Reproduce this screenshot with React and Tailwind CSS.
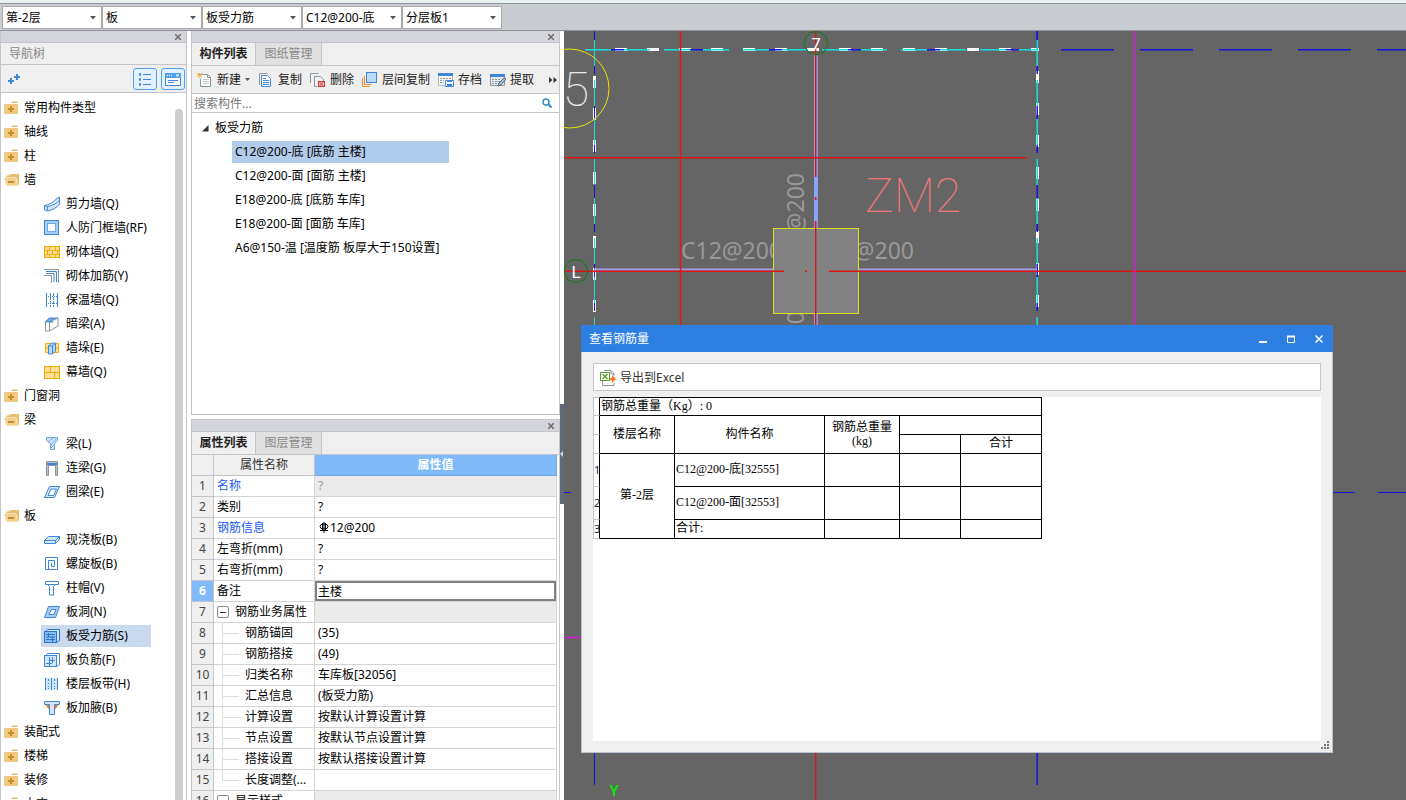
import React, { useState } from 'react';

const B = '#3f86d6';
const L = '#d3e5fa';

const shapes = {
  shear: <path d="M.5 9.500c5-1 9-3 11-6l4-2.500v7c-3 4-7 6-12 7l-3-1zM.5 9.500l3 1c5-1 9-3 12-6.500M3.500 10.500v4" fill={L} stroke={B} />,
  frame: <g stroke={B}><rect x=".5" y=".5" width="14" height="14" fill="#a9cdf5" /><rect x="3.5" y="3.5" width="8" height="8" fill="#fff" stroke="#6ea8ea" /><rect x="5" y="4" width="5" height="7" fill="#fff" stroke="none" /></g>,
  brick: <g stroke="#f5a800" fill="#ffe09a"><rect x="0.5" y="2.5" width="15" height="11" /><path d="M0 6.500h16M0 10.500h16M5.500 2v4M11.500 2v4M3.500 6v4M8.500 6v4M13.500 6v4M5.500 10v4M11.500 10v4" /></g>,
  corner: <g fill="none"><path d="M0 1.500h14.500V15M0 7.500h7.500V15" stroke="#8a959c" /><path d="M2 3.500h10.500V14M2 5.500h8V14" stroke={B} /></g>,
  insulate: <g stroke={B}><path d="M2.500 1v14M13.500 1v14" /><path d="M6.500 1v14M9.500 1v14" strokeDasharray="3 1" /><path d="M2 4.500h12M2 11.500h12" strokeDasharray="1 1" /></g>,
  hidden: <g><path d="M1.500 6l4-4h8.500l-4 4z" fill="#78b0ee" stroke={B} /><path d="M1.500 6h4v9h-4zM5.500 6l8.500-4v8l-8.500 5" fill="#fff" stroke="#8a959c" /><path d="M1.500 6l4-4M5.500 6l4-4M5.500 6h4" fill="none" stroke={B} /></g>,
  pier: <g><path d="M1.500 3.500h13v9h-13zM1 8h14" fill="#ffe09a" stroke="#f5a800" /><path d="M4.500 6l3-3h4v8l-3 3h-4zM4.500 6h4v8M8.500 6l3-3" fill="#b9d8f8" stroke={B} /></g>,
  curtain: <g stroke="#f5a800" fill="#ffe09a"><rect x="0.5" y="2.5" width="15" height="12" /><path d="M0 8.500h16M6.500 2v6M10.500 8v6" /></g>,
  beam: <path d="M2.500 1.500h11v3l-3 3v6h-4v-6l-4-3zM4 6l5-4M7 9l5-6M7 12l3-3" fill={L} stroke="#6ea3e0" />,
  lintel: <g><path d="M2.500 15.500V1.500h11v14h-2V5.500h-7v10z" fill="#b5bfc4" stroke="#8a959c" /><path d="M3 4h10" stroke={B} strokeWidth="2" /></g>,
  ring: <path d="M5.500 2.500h10l-5 11h-10zM7 5h5.500l-3 6.500h-5.500z" fill={L} fillRule="evenodd" stroke={B} />,
  slab: <g fill={L} stroke={B}><path d="M.5 8.500l4-4h11l-4 4z" /><path d="M.5 8.500h11v3H.5zM11.500 8.500l4-4v3l-4 4" /></g>,
  spiral: <g fill="none" stroke={B}><path d="M1.500 1.500h12v12h-12z" /><path d="M4.500 14V4.500h6v6h-3v-3.500" /></g>,
  cap: <path d="M1.500 1.500h13v3h-3l-2 2v8.500h-4V6.500l-2-2h-2zM2 4.500h12" fill="#fff" stroke={B} />,
  hole: <g stroke={B}><path d="M4.500 2.500h11l-4 11h-11z" fill="#a9cdf5" /><path d="M7.500 5.500h4.500l-2 5h-5z" fill="#fff" /></g>,
  rebar: <g stroke="#2f74c6"><path d="M1.500 3.500l2-2h12v11l-3 2" fill={L} /><rect x=".5" y="3.5" width="12" height="11" fill="#8abdf2" /><path d="M2 6.500h9M2 11.500h9M4.500 5v4M8.500 8v6M2 9h9" fill="none" /></g>,
  negative: <g stroke={B}><path d="M1.500 3.500l2-2h12v11l-3 2" fill="#fff" /><rect x=".5" y="3.5" width="12" height="11" fill={L} /><path d="M2 11.500h6M5.500 5v9M8.500 5v6M5 8.500h6" fill="none" /></g>,
  strip: <g><rect x="1" y="2" width="13" height="12" fill={L} /><path d="M1.500 2v12M7.500 2v12M13.500 2v12" stroke={B} /><path d="M4.500 4v8M10.500 4v8M1 3.500h13M1 12.500h13" stroke={B} strokeDasharray="1 2" /></g>,
  haunch: <g><path d="M1 4h14l-5 7H6z" fill="#f5790a" /><path d="M.5 1.500h15v3h-5v10h-5v-10h-5z" fill={L} stroke={B} /></g>,
  create: <g><path d="M4.500 2.500h6l3 3v9h-10v-8" fill="#fff" stroke="#8a959c" /><path d="M10.500 2.500v3h3" fill="none" stroke="#8a959c" /><path d="M6 7.500h6M6 9.500h6M6 11.500h6" stroke="#c3cbd0" /><path d="M0 1h1v1H0zM4 1h1v1H4zM2 1h1v1H2zM1 2h3v2H1zM0 4h1v1H0zM4 4h1v1H4zM2 5h1v1H2z" fill="#f5a020" /></g>,
  copy: <g><path d="M1.500 13V1.500h8" fill="none" stroke="#8a959c" /><path d="M3.500 3.500h6l3 3v8h-9z" fill="#fff" stroke={B} /><path d="M5 8.500h6M5 10.500h6M5 12.500h6M5 6.500h3" stroke={B} /></g>,
  remove: <g><path d="M.5 11V1.500h8M7 14.500H4.500v-10h6l3 3V9" fill="none" stroke="#8a959c" /><rect x="8.500" y="9.500" width="6" height="5" fill="#f3c4c4" stroke="#c93c3c" /><path d="M9.500 10l4 4M13.500 10l-4 4" stroke="#c93c3c" /></g>,
  layers: <g><path d="M.5 6v8.500h7M2.500 4v8.500h7" fill="none" stroke="#f08a2c" /><rect x="4.500" y=".5" width="10" height="10" fill="#bcdafa" stroke={B} /></g>,
  archive: <g><path d="M0.500 1.500h14v12H.5z" fill="#fff" stroke="#a9b4bb" /><path d="M0 1h15v3H0z" fill={B} /><path d="M2 6.500h5M2 8.500h4M2 10.500h4M8 6.500h6" stroke="#8a959c" strokeDasharray="2 1" /><path d="M7.500 8.500h8v6h-8z" fill="#fff" stroke={B} /><path d="M9 8h5v2H9zM9 12h5v3H9z" fill={B} /></g>,
  extract: <g><path d="M0.500 2.500h14v11H.5z" fill="#e6eaec" stroke="#8a959c" /><path d="M0 2h15v3H0z" fill={B} /><path d="M2 7.500h9M2 9.500h8M2 11.500h6" stroke="#8a959c" strokeDasharray="2 1" /><path d="M8 14l1-3 5-5 2 1-5 6z" fill="#9fc6ee" stroke="#566168" /></g>,
  excel: <g><path d="M4 .5h7l3 3V6M2.500 11v4.500h11.500V13M11 1v3h3" fill="none" stroke="#8a959c" /><rect x=".5" y="2.5" width="9" height="8" fill="#fff" stroke="#5fa130" /><path d="M2.500 4l5 5M7.500 4l-5 5" stroke="#5fa130" strokeWidth="1.500" /><path d="M10 8h2V5l4 4-4 4v-3h-2z" fill="#f5771b" /></g>,
  closed: <g><path d="M8 1.500h5l1 1.500H7z" fill="#e9bd6b" /><rect x="0" y="4" width="14" height="10" rx="1" fill="#efc981" /><path d="M7 6v6M4 9h6" stroke="#c2902f" strokeWidth="2" /></g>,
  open: <g><path d="M2 4l6-2h7v11H3z" fill="#e9bd6b" /><path d="M0 5.500h12l2 8.500H2.500z" fill="#f2cf8c" stroke="#fff" strokeWidth="0.500" /><path d="M4 10h6" stroke="#c2902f" strokeWidth="2" /></g>,
};

const Icon = ({ name }) => (
  <svg className="w-4 h-4 shrink-0" viewBox="0 0 16 16" fill="none">{shapes[name]}</svg>
);

const navTree = [
  { label: '常用构件类型' },
  { label: '轴线' },
  { label: '柱' },
  {
    label: '墙',
    items: [
      ['shear', '剪力墙(Q)'],
      ['frame', '人防门框墙(RF)'],
      ['brick', '砌体墙(Q)'],
      ['corner', '砌体加筋(Y)'],
      ['insulate', '保温墙(Q)'],
      ['hidden', '暗梁(A)'],
      ['pier', '墙垛(E)'],
      ['curtain', '幕墙(Q)'],
    ],
  },
  { label: '门窗洞' },
  {
    label: '梁',
    items: [
      ['beam', '梁(L)'],
      ['lintel', '连梁(G)'],
      ['ring', '圈梁(E)'],
    ],
  },
  {
    label: '板',
    items: [
      ['slab', '现浇板(B)'],
      ['spiral', '螺旋板(B)'],
      ['cap', '柱帽(V)'],
      ['hole', '板洞(N)'],
      ['rebar', '板受力筋(S)'],
      ['negative', '板负筋(F)'],
      ['strip', '楼层板带(H)'],
      ['haunch', '板加腋(B)'],
    ],
  },
  { label: '装配式' },
  { label: '楼梯' },
  { label: '装修' },
  { label: '土方' },
];

const components = [
  'C12@200-底 [底筋 主楼]',
  'C12@200-面 [面筋 主楼]',
  'E18@200-底 [底筋 车库]',
  'E18@200-面 [面筋 车库]',
  'A6@150-温 [温度筋 板厚大于150设置]',
];

const properties = [
  { name: '名称', value: '?', blue: true, locked: true },
  { name: '类别', value: '?' },
  { name: '钢筋信息', value: '12@200', blue: true, grade: true },
  { name: '左弯折(mm)', value: '?' },
  { name: '右弯折(mm)', value: '?' },
  { name: '备注', value: '主楼', active: true },
  { name: '钢筋业务属性', group: true },
  { name: '钢筋锚固', value: '(35)', child: true },
  { name: '钢筋搭接', value: '(49)', child: true },
  { name: '归类名称', value: '车库板[32056]', child: true },
  { name: '汇总信息', value: '(板受力筋)', child: true },
  { name: '计算设置', value: '按默认计算设置计算', child: true },
  { name: '节点设置', value: '按默认节点设置计算', child: true },
  { name: '搭接设置', value: '按默认搭接设置计算', child: true },
  { name: '长度调整(...', value: '', child: true, last: true },
  { name: '显示样式', group: true },
];

const selects = [
  ['楼层', '第-2层'],
  ['构件类型', '板'],
  ['构件种类', '板受力筋'],
  ['构件', 'C12@200-底'],
  ['分层', '分层板1'],
];

const TopBar = () => (
  <header className="shrink-0 border-t-[3px] border-[#e8f0f0]">
    <div className="flex h-7 items-center border-y border-[#8c9299] bg-[#c9ccd1] px-[2px]">
      {selects.map(([label, value]) => (
        <div key={label} className="relative">
          <select aria-label={label} className="block h-[23px] w-[100px] appearance-none border border-[#a8a8a8] bg-white pl-[3px] pr-5 pt-[2px] outline-none">
            <option>{value}</option>
          </select>
          <svg className="pointer-events-none absolute right-[6px] top-[10px] h-[4px] w-[6px]" viewBox="0 0 6 4"><path d="M0 0h6L3 3.500z" fill="#555" /></svg>
        </div>
      ))}
    </div>
  </header>
);

const PanelStrip = () => (
  <div className="flex h-3 shrink-0 items-center justify-end border-b border-[#c3c5cb] bg-[#d4d5db] pr-[5px]">
    <button aria-label="关闭">
      <svg className="h-[6px] w-[6px]" viewBox="0 0 6 6"><path d="M0 0l6 6M6 0L0 6" stroke="#6b6b6b" strokeWidth="1.500" /></svg>
    </button>
  </div>
);

const Tabs = ({ active, other }) => (
  <div className="flex h-[23px] shrink-0 border-b border-[#c3c5cb] bg-[#efefef]">
    <button className="w-16 border-r border-[#c3c5cb] font-bold text-[#222]">{active}</button>
    <button className="w-[66px] border-r border-[#c3c5cb] bg-[#e0e0e0] text-[#888]">{other}</button>
  </div>
);

const NavPanel = () => {
  const [selected, setSelected] = useState('板受力筋(S)');
  return (
    <aside className="flex w-[187px] shrink-0 flex-col border-x border-[#c3c5cb]">
      <PanelStrip />
      <h2 className="flex h-[22px] shrink-0 items-center border-b border-[#c3c5cb] bg-[#efefef] pl-2 text-[#888]">导航树</h2>
      <div className="flex h-7 shrink-0 items-center gap-1 border-b border-[#c3c5cb] bg-[#efefef] pl-[6px] pr-px">
        <button aria-label="新增" className="mr-auto">
          <svg className="h-4 w-4" viewBox="0 0 16 16"><path d="M4 7v6M1 10h6M10 3v6M7 6h6" stroke={B} strokeWidth="2" /></svg>
        </button>
        <button aria-label="列表" className="flex h-[22px] w-6 items-center justify-center rounded-[3px] border border-[#4f9ff0] bg-[#e3f1ff]">
          <svg className="h-4 w-4" viewBox="0 0 16 16" fill="none"><path d="M6 3.500h8M6 8.500h8M6 13.500h8" stroke={B} /><path d="M2.500 2.500h1v2h-1zM2.500 7.500h1v2h-1zM2.500 12.500h1v2h-1z" stroke={B} /></svg>
        </button>
        <button aria-label="窗口" className="flex h-[22px] w-6 items-center justify-center rounded-[3px] border border-[#4f9ff0] bg-[#e3f1ff]">
          <svg className="h-4 w-4" viewBox="0 0 16 16" fill="none"><path d="M.5 2.500h15v12H.5z" fill="#fff" stroke={B} /><path d="M0 2h16v5H0z" fill="#4f9ff0" /><path d="M2 4.500h1M4 4.500h1M6 4.500h1M11 4h3l-1.500 1.500z" stroke="#fff" /><path d="M3 9.500h10M3 11.500h6" stroke={B} /></svg>
        </button>
      </div>
      <div className="flex min-h-0 flex-1 overflow-hidden bg-white">
        <ul className="flex-1 pt-[3px]">
          {navTree.map(group => (
            <li key={group.label}>
              <button className="flex h-6 items-center gap-1 pl-[3px]">
                <Icon name={group.items ? 'open' : 'closed'} />
                <span>{group.label}</span>
              </button>
              {group.items && (
                <ul className="pl-10">
                  {group.items.map(([icon, label]) => (
                    <li key={label + icon} className="flex h-6 items-center">
                      <button
                        onClick={() => setSelected(label)}
                        className={`flex h-[22px] w-[110px] items-center gap-[6px] whitespace-nowrap pl-[3px] ${selected === label ? 'bg-[#c9d9f0]' : ''}`}
                      >
                        <Icon name={icon} />
                        <span>{label}</span>
                      </button>
                    </li>
                  ))}
                </ul>
              )}
            </li>
          ))}
        </ul>
        <div className="mr-[3px] mt-4 w-2 rounded-t-full bg-[#cdcdcd]" />
      </div>
    </aside>
  );
};

const tools = [
  ['create', '新建'],
  ['copy', '复制'],
  ['remove', '删除'],
  ['layers', '层间复制'],
  ['archive', '存档'],
  ['extract', '提取'],
];

const ComponentPanel = () => {
  const [selected, setSelected] = useState(0);
  return (
    <section className="flex min-h-0 flex-[384] flex-col border-x border-b border-[#c3c5cb]">
      <PanelStrip />
      <Tabs active="构件列表" other="图纸管理" />
      <div className="flex h-7 shrink-0 items-center gap-2 border-b border-[#c3c5cb] bg-[#efefef] pl-[5px] pr-[2px]">
        {tools.map(([icon, label]) => (
          <button key={icon} className="flex items-center gap-1 whitespace-nowrap text-[#222]">
            <Icon name={icon} />
            <span>{label}</span>
            {icon === 'create' && <svg className="h-[3px] w-[5px]" viewBox="0 0 5 3"><path d="M0 0h5L2.500 3z" fill="#555" /></svg>}
          </button>
        ))}
        <button aria-label="更多" className="ml-auto">
          <svg className="h-[6px] w-2" viewBox="0 0 8 6"><path d="M0 0l3.500 3L0 6zM4.500 0L8 3 4.500 6z" fill="#333" /></svg>
        </button>
      </div>
      <div className="flex h-[19px] shrink-0 items-center border-b border-[#c3c5cb] bg-white pl-[2px] pr-[7px]">
        <input aria-label="搜索构件" placeholder="搜索构件..." className="min-w-0 flex-1 pt-px outline-none placeholder:text-[#777]" />
        <svg className="h-[10px] w-[10px]" viewBox="0 0 10 10" fill="none"><circle cx="4" cy="4" r="3" stroke="#2f8fca" strokeWidth="1.500" /><path d="M6.500 6.500L9.500 9.500" stroke="#2f8fca" strokeWidth="2" /></svg>
      </div>
      <div className="min-h-0 flex-1 overflow-hidden bg-white pt-[3px]">
        <button className="flex h-6 items-center gap-[6px] pl-[10px]">
          <svg className="h-[7px] w-[7px]" viewBox="0 0 7 7"><path d="M6.500 0v6.500H0z" fill="#333" /></svg>
          板受力筋
        </button>
        <ul className="pl-10">
          {components.map((c, i) => (
            <li key={c} className="flex h-6 items-center">
              <button
                onClick={() => setSelected(i)}
                className={`h-[22px] w-[217px] whitespace-nowrap pl-[3px] text-left ${selected === i ? 'bg-[#b1cbeb]' : ''}`}
              >
                {c}
              </button>
            </li>
          ))}
        </ul>
      </div>
    </section>
  );
};

const Branch = ({ last }) => (
  <svg className="mr-[6px] h-5 w-[17px] shrink-0" viewBox="0 0 17 20">
    <path d={last ? 'M0.5 0v10.5H17' : 'M0.5 0v20M0 10.5h17'} fill="none" stroke="#ddd" />
  </svg>
);

const PropertyPanel = () => (
  <section className="flex min-h-0 flex-[381] flex-col overflow-hidden border-x border-t border-[#c3c5cb]">
    <PanelStrip />
    <Tabs active="属性列表" other="图层管理" />
    <div className="min-h-0 flex-1 overflow-hidden bg-white pr-[2px]">
      <table className="w-full table-fixed border-separate border-spacing-0">
        <colgroup>
          <col className="w-[22px]" />
          <col className="w-[101px]" />
          <col />
        </colgroup>
        <thead>
          <tr className="h-[21px] text-center">
            <th className="border-b border-r border-[#c3c5cb] bg-[#efefef] p-0"></th>
            <th className="border-b border-r border-[#c3c5cb] bg-[#efefef] p-0 font-normal text-[#333]">属性名称</th>
            <th className="border-b border-r border-[#6aa8ea] bg-[#80bafb] p-0 font-bold text-white">属性值</th>
          </tr>
        </thead>
        <tbody>
          {properties.map((p, i) => (
            <tr key={p.name} className="h-[21px]">
              <th className={`border-b border-r border-[#c3c5cb] p-0 text-center ${p.active ? 'bg-[#80bafb] font-bold text-white' : 'bg-[#efefef] font-normal text-[#444]'}`}>{i + 1}</th>
              <td className={`border-b border-r border-[#d4d4d4] p-0 ${p.blue ? 'text-[#1a5cf0]' : ''}`}>
                <div className={`flex h-5 items-center overflow-hidden whitespace-nowrap ${p.child ? 'pl-2' : 'pl-[3px]'}`}>
                  {p.group && (
                    <button aria-label="折叠" className="mr-[6px] flex h-3 w-3 items-center justify-center rounded-[2px] border border-[#888]">
                      <span className="h-px w-[6px] bg-[#333]" />
                    </button>
                  )}
                  {p.child && <Branch last={p.last} />}
                  {p.name}
                </div>
              </td>
              <td className={`border-b border-r border-[#d4d4d4] p-0 ${p.locked || p.group ? 'bg-[#ebebeb] text-[#999]' : ''}`}>
                {p.active ? (
                  <input aria-label={p.name} defaultValue={p.value} className="block h-5 w-full border-2 border-[#808080] pl-px outline-none" />
                ) : (
                  <div className="flex h-5 items-center pl-[3px]">
                    {p.grade && (
                      <svg className="h-3 w-3" viewBox="0 0 12 12" fill="none" stroke="#000"><path d="M6 0v11M4.500 1v7M7.500 1v7M2 8.500h8" /><ellipse cx="6" cy="4.500" rx="4" ry="2.500" /></svg>
                    )}
                    {p.value}
                  </div>
                )}
              </td>
            </tr>
          ))}
        </tbody>
      </table>
    </div>
  </section>
);

// drawing uses screen coordinates, shifted by the origin of the view
const Drawing = () => (
  <svg className="block h-full w-full" fill="none">
    <g transform="translate(-564 -31)">
      <g stroke="#1414e0">
        <path d="M594.500 31v19M587 49.500h8M594.500 740v45" />
        <path d="M1037.200 31v19M1037.200 740v45" strokeWidth="1.500" />
        <path d="M1061 49.700h900" strokeWidth="1.500" strokeDasharray="53 26" />
        <path d="M564 492.500h7M1300 492.500h55M1378 492.500h52" />
      </g>

      <g stroke="#fff" strokeWidth="3" strokeDasharray="12 20">
        <path d="M594.500 76v249M615 49.500h424" />
        <path d="M1037.500 71v254" />
      </g>
      <g stroke="#16dede" strokeDasharray="26 13 26 14">
        <path d="M594.500 1v324" />
        <path d="M1037.200 1v324M585 49.700h452" strokeWidth="1.500" />
      </g>
      <g stroke="#1414e0">
        <path d="M594.500 27v298" strokeDasharray="13 26 8 32" />
        <path d="M1037.200 27v298" strokeWidth="1.500" strokeDasharray="13 26 8 32" />
        <path d="M611 49.700h426" strokeWidth="1.500" strokeDasharray="13 66" />
      </g>

      <circle cx="569.500" cy="88.500" r="39.500" stroke="#e6e600" />
      <text x="589" y="106" textAnchor="end" fill="#e8e8e8" fontFamily="Roboto" fontWeight="100" fontSize="48">05</text>

      <path d="M816 55v173M816 314v20" stroke="#9494dc" strokeWidth="4" />
      <path d="M594 269.500h180M858 269.500h179" stroke="#a99bf0" strokeWidth="2" />
      <g fill="#999" fontFamily="Noto Sans" fontSize="23">
        <text x="681" y="259">C12@200</text>
        <text x="914" y="259" textAnchor="end">C12@200</text>
        <text transform="translate(804 173) rotate(-90)" textAnchor="end">C12@200</text>
        <text transform="translate(804 298) rotate(-90)" textAnchor="end">C12@200</text>
      </g>
      <rect x="773.500" y="228.500" width="85" height="85" fill="#828282" stroke="#dede10" />

      <g stroke="#dc1414" strokeWidth="1.400">
        <path d="M564 157.700h463M564 271.300h220M805 271.300h2M829 271.300h1400" />
        <path d="M815.700 31v769" />
        <path d="M680.500 31v294" stroke="#f01010" />
      </g>
      <path d="M816 177v20M816 200v21" stroke="#88a8ff" strokeWidth="3" />
      <path d="M1134.500 31v294M564 637.500h20" stroke="#d81cd8" strokeWidth="1.500" />

      <g stroke="#0a7d0a">
        <path d="M811 32h9l6 5 2 7-4 8-8 3-8-3-4-8 2-7z" />
        <path d="M571 260h9l6 5 2 7-4 8-8 3-8-3-4-8 2-7z" />
      </g>
      <g fill="#fff" fontFamily="Roboto" fontSize="17" textAnchor="middle">
        <text x="816" y="50">7</text>
        <text x="576" y="278">L</text>
      </g>
      <text x="913" y="212" textAnchor="middle" fill="#f07878" fontFamily="Roboto" fontWeight="100" fontSize="48">ZM2</text>
      <text x="614" y="796" textAnchor="middle" fill="#00f000" fontFamily="Roboto" fontWeight="500" fontSize="15">Y</text>
    </g>
  </svg>
);

const gutter = 'border-b border-l border-b-[#c5c5ca] border-l-[#c5c5ca] border-r border-r-black p-0 font-["Noto_Sans"] text-[11px] font-normal text-[#224]';
const cell = 'border-b border-r border-black p-0 pb-[2px] font-normal';

const QuantityTable = () => (
  <table className='w-[449px] table-fixed border-separate border-spacing-0 text-center font-["Liberation_Serif","Noto_Sans_CJK_SC",serif]'>
    <colgroup>
      <col className="w-[7px]" />
      <col className="w-[75px]" />
      <col className="w-[150px]" />
      <col className="w-[75px]" />
      <col className="w-[61px]" />
      <col className="w-[81px]" />
    </colgroup>
    <thead>
      <tr className="h-[19px]">
        <td className={`${gutter} border-t border-t-[#c5c5ca]`}></td>
        <td colSpan={5} className={`${cell} border-t pl-px text-left`}>钢筋总重量（Kg）: 0</td>
      </tr>
      <tr className="h-[19px]">
        <td className={gutter}></td>
        <th rowSpan={2} className={cell}>楼层名称</th>
        <th rowSpan={2} className={cell}>构件名称</th>
        <th rowSpan={2} className={cell}><div>钢筋总重量</div><div>(kg)</div></th>
        <th colSpan={2} className={cell}></th>
      </tr>
      <tr className="h-[19px]">
        <td className={gutter}></td>
        <th className={cell}></th>
        <th className={cell}>合计</th>
      </tr>
    </thead>
    <tbody>
      <tr className="h-[33px]">
        <th className={gutter}>1</th>
        <td rowSpan={3} className={cell}>第-2层</td>
        <td className={`${cell} pl-px text-left`}>C12@200-底[32555]</td>
        <td className={cell}></td>
        <td className={cell}></td>
        <td className={cell}></td>
      </tr>
      <tr className="h-[33px]">
        <th className={gutter}>2</th>
        <td className={`${cell} pl-px text-left`}>C12@200-面[32553]</td>
        <td className={cell}></td>
        <td className={cell}></td>
        <td className={cell}></td>
      </tr>
      <tr className="h-[19px]">
        <th className={gutter}>3</th>
        <td className={`${cell} pl-px text-left`}>合计:</td>
        <td className={cell}></td>
        <td className={cell}></td>
        <td className={cell}></td>
      </tr>
    </tbody>
  </table>
);

const QuantityDialog = () => (
  <div role="dialog" aria-label="查看钢筋量" className="absolute left-[17px] top-[294px] flex h-[428px] w-[752px] flex-col border border-t-0 border-[#b9c3d0] bg-[#efefef]">
    <div className="-mx-px flex h-[27px] shrink-0 items-center bg-[#2d80e1] px-2 text-white">
      <h2 className="mr-auto">查看钢筋量</h2>
      <div className="flex gap-4">
        <button aria-label="最小化"><svg className="h-3 w-3" viewBox="0 0 12 12"><path d="M2 9h8" stroke="#fff" strokeWidth="2" /></svg></button>
        <button aria-label="最大化"><svg className="h-3 w-3" viewBox="0 0 12 12" fill="none"><path d="M2.500 3.500h7v6h-7z" stroke="#fff" /><path d="M2 3.500h8" stroke="#fff" strokeWidth="2" /></svg></button>
        <button aria-label="关闭"><svg className="h-3 w-3" viewBox="0 0 12 12"><path d="M2.500 2.500l7 7M9.500 2.500l-7 7" stroke="#fff" strokeWidth="1.500" /></svg></button>
      </div>
    </div>
    <div className="flex min-h-0 flex-1 flex-col gap-[6px] px-[11px] py-[11px]">
      <div className="flex h-7 shrink-0 items-center border border-[#c5c5cc] bg-white pl-[6px] pt-px">
        <button className="flex items-center gap-1 text-[#333]">
          <Icon name="excel" />
          导出到Excel
        </button>
      </div>
      <div className="min-h-0 flex-1 bg-white">
        <QuantityTable />
      </div>
    </div>
    <svg className="absolute bottom-[2px] right-[2px] h-[9px] w-[9px]" viewBox="0 0 9 9"><path d="M6 0h2v2H6zM3 3h2v2H3zM6 3h2v2H6zM0 6h2v2H0zM3 6h2v2H3zM6 6h2v2H6z" fill="#777" /></svg>
  </div>
);

export default function App() {
  return (
    <div className='flex h-screen flex-col overflow-hidden bg-white font-["Noto_Sans","Noto_Sans_CJK_SC",sans-serif] text-[12px] leading-[14px] text-black'>
      <TopBar />
      <div className="flex min-h-0 flex-1">
        <NavPanel />
        <div className="ml-1 flex w-[369px] shrink-0 flex-col gap-1">
          <ComponentPanel />
          <PropertyPanel />
        </div>
        <div className="flex w-1 shrink-0 items-center">
          <button aria-label="收起面板" className="mt-[77px] flex h-[100px] w-1 items-center bg-[#5f6b78]">
            <svg className="h-[6px] w-[3px]" viewBox="0 0 3 6"><path d="M3 0v6L0 3z" fill="#d0d4d8" /></svg>
          </button>
        </div>
        <main className="relative min-w-0 flex-1 overflow-hidden bg-[#656565]">
          <Drawing />
          <QuantityDialog />
        </main>
      </div>
    </div>
  );
}
